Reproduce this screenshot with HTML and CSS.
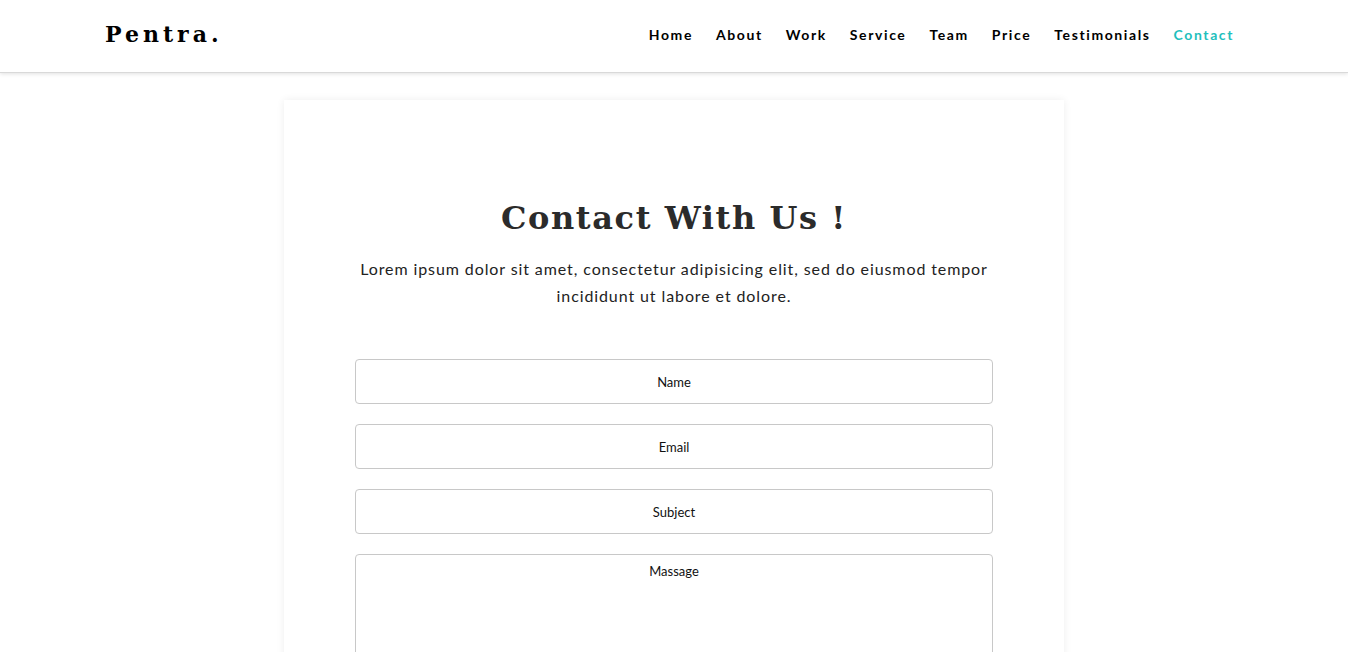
FILE: index.html
```html
<!DOCTYPE html>
<html lang="en">
<head>
    <meta charset="UTF-8">
    <meta name="viewport" content="width=device-width, initial-scale=1.0">
    <title>Pentra - Contact</title>
    <link rel="stylesheet" href="styles.css">
</head>
<body>
    <!-- Top navigation -->
    <header class="site-header">
        <div class="container header-inner">
            <a href="#" class="logo">Pentra.</a>
            <nav class="main-nav">
                <a href="#">Home</a>
                <a href="#">About</a>
                <a href="#">Work</a>
                <a href="#">Service</a>
                <a href="#">Team</a>
                <a href="#">Price</a>
                <a href="#">Testimonials</a>
                <a href="#" class="active">Contact</a>
            </nav>
        </div>
    </header>

    <!-- Contact section -->
    <section class="contact">
        <div class="contact-card">
            <h2 class="contact-title">Contact With Us !</h2>
            <p class="contact-text">Lorem ipsum dolor sit amet, consectetur adipisicing elit, sed do eiusmod tempor incididunt ut labore et dolore.</p>
            <form class="contact-form">
                <input type="text" class="field" placeholder="Name">
                <input type="email" class="field" placeholder="Email">
                <input type="text" class="field" placeholder="Subject">
                <textarea class="field field-message" placeholder="Massage"></textarea>
            </form>
        </div>
    </section>
</body>
</html>
```

FILE: styles.css
```css
body {
    margin: 0;
    font-family: Lato, "Open Sans", sans-serif;
    background: #fff;
    color: #111;
}
a {
    text-decoration: none;
}
.container {
    width: 1140px;
    margin: 0 auto;
}
.site-header {
    height: 72px;
    background: #fff;
    border-bottom: 1px solid #d9d9d9;
    box-shadow: 0 1px 4px rgba(0,0,0,0.12);
    position: relative;
    z-index: 2;
}
.header-inner {
    display: flex;
    align-items: center;
    justify-content: space-between;
    height: 68px;
}
.logo {
    font-family: "DejaVu Serif", "Liberation Serif", serif;
    font-weight: bold;
    font-size: 22px;
    letter-spacing: 4px;
    color: #000;
    margin-left: 1px;
}
.main-nav {
    display: flex;
    gap: 23px;
    margin-right: 10px;
}
.main-nav a {
    font-size: 14px;
    font-weight: bold;
    letter-spacing: 1.6px;
    color: #000;
}
.main-nav a.active {
    color: #1fc0bd;
}
.contact {
    padding-top: 27px;
}
.contact-card {
    width: 640px;
    margin: 0 auto;
    padding: 99px 70px 40px;
    background: #fff;
    box-shadow: 0 0 8px rgba(0,0,0,0.07);
    text-align: center;
}
.contact-title {
    font-family: "DejaVu Serif", "Liberation Serif", serif;
    font-weight: bold;
    font-size: 32px;
    letter-spacing: 1.6px;
    color: #2b2b2b;
    margin: 0 0 18px;
}
.contact-text {
    font-size: 16px;
    line-height: 27px;
    letter-spacing: 0.9px;
    color: #222;
    margin: 0 0 50px;
}
.contact-form {
    display: flex;
    flex-direction: column;
    gap: 20px;
}
.field {
    box-sizing: border-box;
    width: 638px;
    height: 45px;
    margin: 0 0 0 1px;
    border: 1px solid #c8c8c8;
    border-radius: 4px;
    font-family: Lato, sans-serif;
    font-size: 13px;
    text-align: center;
    background: #fff;
}
.field::placeholder {
    color: #111;
}
.field-message {
    height: 150px;
    padding-top: 8px;
    resize: none;
}
```
